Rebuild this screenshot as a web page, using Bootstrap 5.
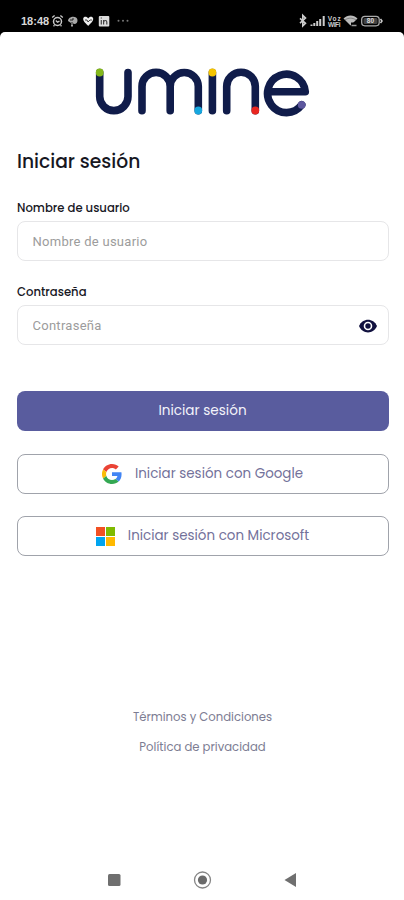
<!DOCTYPE html>
<html lang="es">
<head>
<meta charset="utf-8">
<meta name="viewport" content="width=device-width, initial-scale=1">
<title>umine</title>
<link href="https://cdn.jsdelivr.net/npm/bootstrap@5.3.0/dist/css/bootstrap.min.css" rel="stylesheet">
<style>
body{font-family:Poppins,Inter,sans-serif;background:#000;color:#17171f;height:900px;overflow:hidden}
svg{display:block;flex:none}
.status{height:32px;padding:11px 20px 0 21px;color:#d8d8d8}
.clock{font:700 11px/20px "Liberation Sans",sans-serif;width:30px;white-space:nowrap}
.screen{height:868px;background:#fff;border-radius:5px 5px 0 0;padding:32px 15px 10px 17px}
.logo{margin-left:74px}
.title{font-size:18.700px;line-height:24px;font-weight:500;margin:29px 0 0}
.lbl{font-size:11.650px;line-height:16px;font-weight:500;margin:0 0 5px}
.lbl-user{margin-top:26px}
.lbl-pass{margin-top:23px}
.field{height:40px;border:1px solid #e6e6e8;border-radius:8px;padding:1px 11px 0 14.500px}
.field input{font:400 13px/20px Roboto,sans-serif;border:0;padding:0;background:none;letter-spacing:.270px;box-shadow:none!important}
.field input::placeholder{color:#9c9c9c;opacity:1}
.actions{row-gap:22.500px;margin-top:46px}
.act{height:40px;border-radius:8px;font-size:13.600px;line-height:20px;padding:0 1px 0 0}
.act-main{background:#595c9e;color:#f3f3fa;border:0}
.act-alt{border:1px solid #a0a3ab;color:#73719a;background:#fff;font-size:13.450px}
.brand{margin-right:13px}
.links{gap:12px;margin-top:152px;padding-right:1px}
.legal{font-size:11.650px;line-height:18px;color:#7c7c92;text-decoration:none}
</style>
<script src="https://cdn.jsdelivr.net/npm/bootstrap@5.3.0/dist/js/bootstrap.bundle.min.js"></script>
</head>
<body>
<header class="status d-flex justify-content-between">
  <div class="d-flex">
    <span class="clock">18:48</span>
    <svg width="80" height="20" viewBox="51 11 80 20" fill="none" stroke="#c8c8c8">
      <circle cx="57.5" cy="21.5" r="4" stroke-width="1.5"/><path d="M52.2 17.6l2.4-2.1M62.8 17.6l-2.4-2.1M53.5 26.3l1-1M61.5 26.3l-1-1M55.8 20.5l1.700 1.600 2-1" stroke-width="1.300"/>
      <path d="M68 21c0-5 9-6 9.500-1 .3 4-3 4.500-4.500 3.500v3h-2V23z" fill="#a8a8a8" stroke="none"/><path d="M70 20h3v-2m-1 4v3" stroke="#222"/>
      <path d="M83.200 18.500c.5-2.500 4-2 5 0 1-2 4.500-2.500 5 0 .3 3-3 5-5 7.500-2-2.500-5.300-4.500-5-7.500z" fill="#eee" stroke="none"/><path d="M85 20h2l1 2 2-2h2" stroke="#333" stroke-width=".9"/>
      <rect x="98.800" y="16" width="10.500" height="10.500" rx="1" fill="#ddd" stroke="none"/><path d="M101.300 20v4.500m2.300 0V20m0 2c.5-2 3.200-2 3.200 0v2.500M101.300 17.500v1" stroke="#444" stroke-width="1.200"/>
      <g fill="#777" stroke="none"><circle cx="118.500" cy="20.800" r="1"/><circle cx="123" cy="20.800" r="1"/><circle cx="127.500" cy="20.800" r="1"/></g>
    </svg>
  </div>
  <svg width="86" height="20" viewBox="298 11 86 20" fill="none" stroke="#ccc">
    <path d="M300 18.300l5.500 5-2.700 2.600V15.500l2.700 2.600-5.500 5" stroke-width="1.600"/>
    <path d="M311.500 26v-1.500M314.300 26v-3M317.200 26v-5M320.200 26v-7M323.700 26v-10" stroke-width="2"/>
    <g fill="#ccc" stroke="none" font-family="Liberation Sans,sans-serif" font-weight="700" font-size="6.500"><text x="327.800" y="20.500" textLength="13">Voz</text><text x="328" y="26.500" textLength="12.500">WiFi</text></g>
    <path d="M343.500 18.500c4-4 10-4 14 0L350.500 25.500z" fill="#bbb" stroke="none"/><path d="M345 20c3.500-2.500 7.500-2.500 11 0" stroke="#555" stroke-width=".6"/><rect x="351" y="22.500" width="6" height="4" fill="#000" stroke="none"/><path d="M351.500 25.500h5" stroke="#999" stroke-width="1.500"/>
    <rect x="361.700" y="16.300" width="17.500" height="9.500" rx="3.200" stroke="#aaa" stroke-width="1.300"/><rect x="363.500" y="18" width="14" height="6" rx="1.500" fill="#444" stroke="none"/><path d="M380.500 19l1.500 2-1.500 2" stroke-width="1.500"/>
    <text x="366.800" y="23.400" font-family="Liberation Sans,sans-serif" font-weight="700" font-size="6.500" fill="#ddd" stroke="none">80</text>
  </svg>
</header>
<main class="screen d-flex flex-column">
  <svg class="logo" width="224" height="57" viewBox="91 64 224 57" fill="none" stroke="#101c4a" stroke-width="7.600" stroke-linecap="round" role="img" aria-label="umine">
    <path d="M99.700 72.500V96.500a14.150 14.150 0 0 0 28.300 0V72.500M142 110.700V86.500a14.100 14.100 0 0 1 28.200 0V110.700M170.200 86.500a14.050 14.050 0 0 1 28.100 0V110.700M212.400 72.500V110.700M226.700 110.700V86.500a14.300 14.300 0 0 1 28.600 0V110.700M269 91.800H305.300A18.900 19.200 0 1 0 301.700 104.800" stroke-linejoin="round"/>
    <g stroke="none"><circle cx="99.700" cy="72.500" r="3.900" fill="#83b71b"/><circle cx="198.300" cy="110.500" r="3.900" fill="#16a7df"/><circle cx="212.400" cy="72.500" r="3.900" fill="#f5c400"/><circle cx="255.300" cy="110.500" r="3.900" fill="#e92620"/><circle cx="301.700" cy="104.800" r="3.900" fill="#5d579e"/></g>
  </svg>
  <h1 class="title">Iniciar sesión</h1>
  <form class="d-flex flex-column">
    <label class="lbl lbl-user" for="user">Nombre de usuario</label>
    <div class="field d-flex align-items-center"><input id="user" class="form-control" type="text" placeholder="Nombre de usuario"></div>
    <label class="lbl lbl-pass" for="pass">Contraseña</label>
    <div class="field d-flex align-items-center">
      <input id="pass" class="form-control" type="password" placeholder="Contraseña">
      <svg width="18" height="14" viewBox="0 0 18 14"><path d="M0 7C3.500-1.500 14.500-1.500 18 7 14.500 15.500 3.500 15.500 0 7z" fill="#11113f"/><circle cx="9" cy="7" r="3.500" fill="#11113f" stroke="#fff" stroke-width="1.600"/></svg>
    </div>
    <div class="actions d-grid">
      <button type="button" class="btn act act-main">Iniciar sesión</button>
      <button type="button" class="btn act act-alt d-flex align-items-center justify-content-center">
        <svg class="brand" width="20" height="20" viewBox="0 0 48 48"><path fill="#ea4335" d="M24 9.500c3.540 0 6.710 1.220 9.210 3.600l6.850-6.850C35.900 2.380 30.470 0 24 0 14.620 0 6.510 5.380 2.560 13.220l7.980 6.190C12.430 13.720 17.740 9.500 24 9.500z"/><path fill="#4285f4" d="M46.980 24.550c0-1.570-.15-3.090-.38-4.550H24v9.020h12.940c-.58 2.960-2.260 5.480-4.780 7.180l7.730 6c4.510-4.180 7.090-10.360 7.090-17.650z"/><path fill="#fbbc05" d="M10.530 28.590a14.500 14.500 0 0 1 0-9.180l-7.980-6.190a24 24 0 0 0 0 21.560z"/><path fill="#34a853" d="M24 48c6.480 0 11.930-2.130 15.890-5.810l-7.730-6C30.010 37.640 27.240 38.500 24 38.500c-6.260 0-11.570-4.220-13.470-9.910l-7.980 6.190C6.510 42.620 14.620 48 24 48z"/></svg>
        Iniciar sesión con Google
      </button>
      <button type="button" class="btn act act-alt d-flex align-items-center justify-content-center">
        <svg class="brand" width="19" height="19" viewBox="0 0 19 19"><path fill="#f25022" d="M0 0h9v9H0z"/><path fill="#7fba00" d="M10 0h9v9h-9z"/><path fill="#00a4ef" d="M0 10h9v9H0z"/><path fill="#ffb900" d="M10 10h9v9h-9z"/></svg>
        Iniciar sesión con Microsoft
      </button>
    </div>
  </form>
  <div class="links d-flex flex-column align-items-center">
    <a class="legal" href="#">Términos y Condiciones</a>
    <a class="legal" href="#">Política de privacidad</a>
  </div>
  <nav class="d-flex justify-content-center mt-auto">
    <svg width="200" height="20" viewBox="103 870 200 20"><rect x="108" y="874" width="12.500" height="12" rx="1.500" fill="#6f6f6f"/><circle cx="202.500" cy="880" r="8" fill="none" stroke="#858585" stroke-width="1.300"/><circle cx="202.500" cy="880" r="4.600" fill="#6b6b6b"/><path d="M284.500 880l11.500-7v14z" fill="#6f6f6f"/></svg>
  </nav>
</main>
</body>
</html>
